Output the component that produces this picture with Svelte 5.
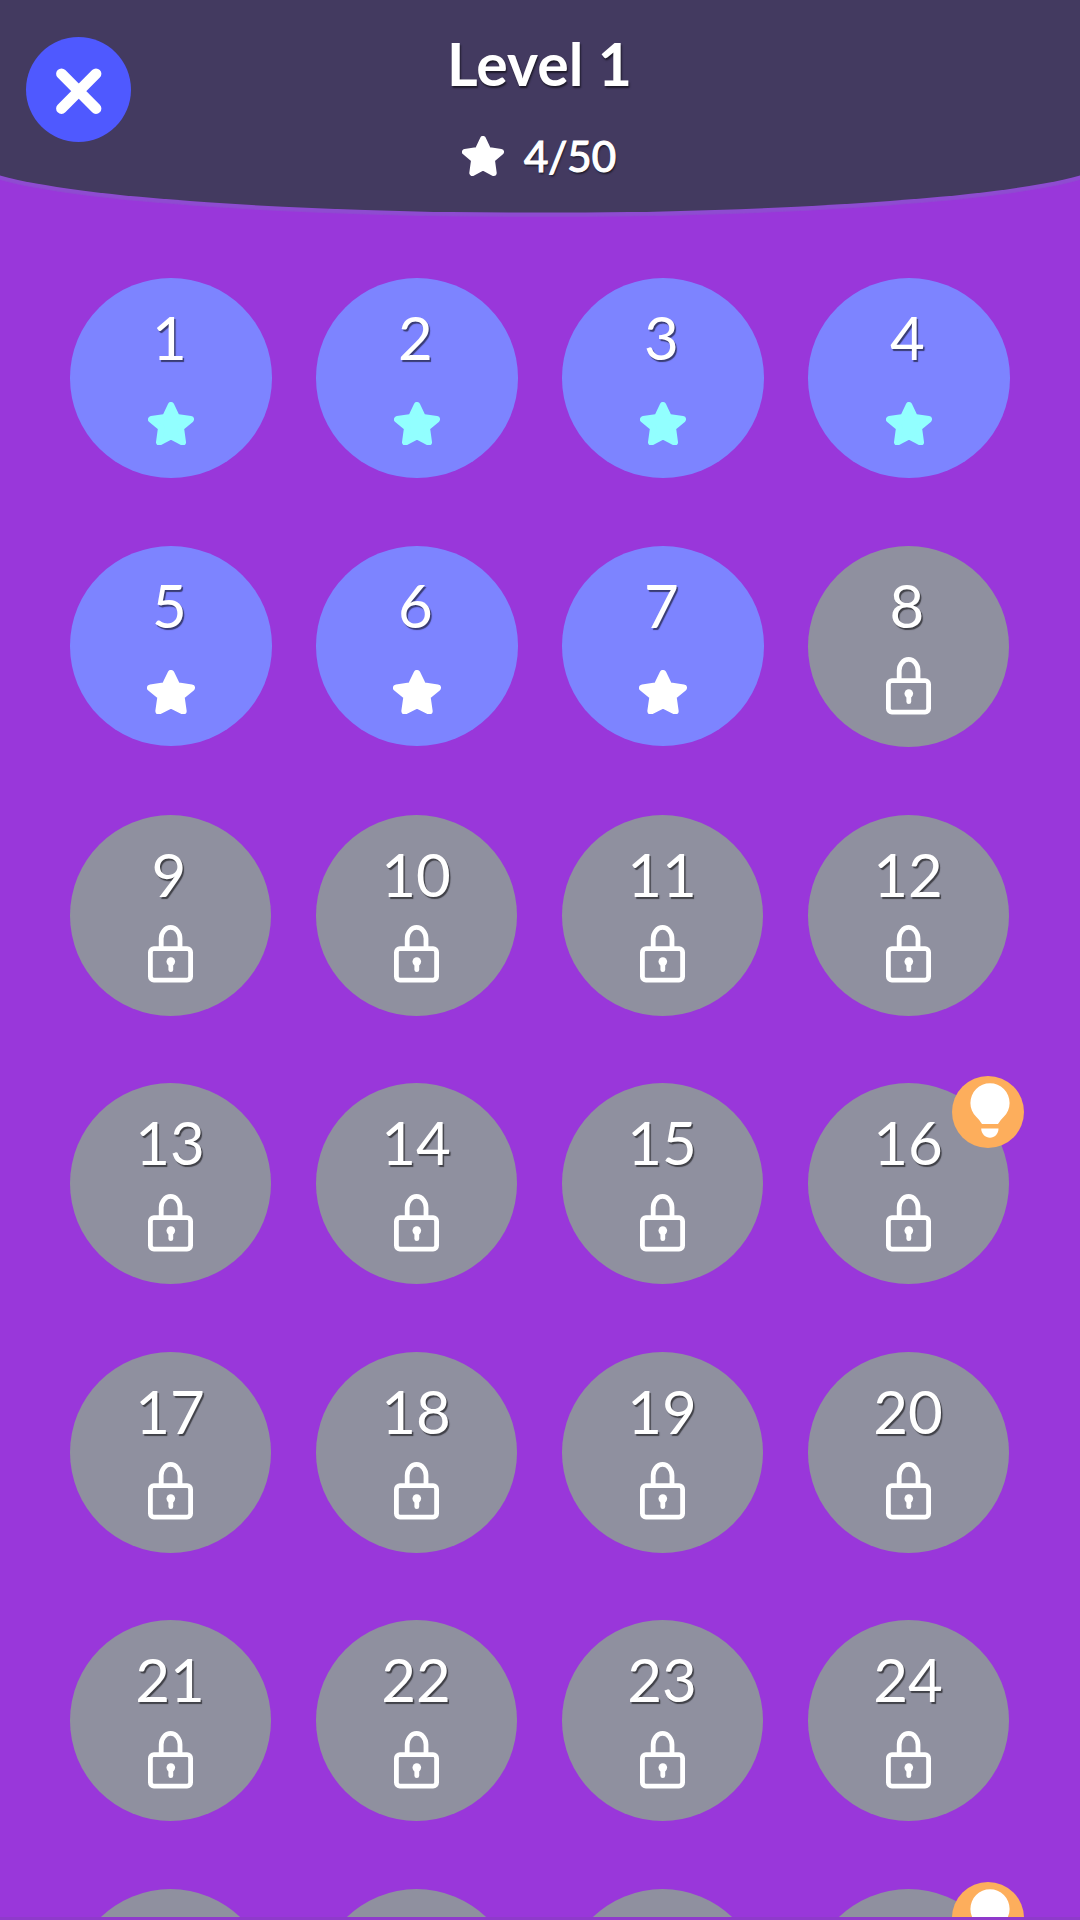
<script lang="ts">
  type Status = "done" | "open" | "locked";
  type Stage = {
    number: number;
    status: Status;
    hint: boolean;
  };

  const title = "Level 1";
  const total = 50;
  const solved = 4;
  const unlocked = 7;
  const visible = 28;
  const hintStages = [16, 28];

  function getStatus(number: number): Status {
    if (number <= solved) return "done";
    if (number <= unlocked) return "open";
    return "locked";
  }

  const stages: Stage[] = Array.from({ length: visible }, (_, index) => {
    const number = index + 1;
    return { number, status: getStatus(number), hint: hintStages.includes(number) };
  });
</script>

{#snippet star()}
  <svg class="star" viewBox="0 0 138 130" preserveAspectRatio="none">
    <path
      d="M69 10 86 46 128 52 98 77 104 120 69 102 34 120 40 77 10 52 52 46Z"
      fill="currentColor"
      stroke="currentColor"
      stroke-width="20"
      stroke-linejoin="round"
    />
  </svg>
{/snippet}

<div class="screen">
  <header>
    <svg class="curve" viewBox="0 0 1080 220">
      <path class="rim" d="M0 0H1080V180A570 54.5 0 0 1 0 180Z" />
      <path class="rim" d="M0 0H1080V179A570 54.5 0 0 1 0 179Z" />
      <path class="fill" d="M0 0H1080V175.500A570 54.5 0 0 1 0 175.500Z" />
    </svg>
    <button class="close" aria-label="Close">
      <svg viewBox="0 0 105 105">
        <path d="M35.5 36.8 70 71.5M70 36.8 35.5 71.5" />
      </svg>
    </button>
    <div class="heading">
      <h1>{title}</h1>
      <div class="score">
        {@render star()}
        <span>{solved}/{total}</span>
      </div>
    </div>
  </header>

  <main>
    {#each stages as { number, status, hint }}
      <div class="cell">
        <button class="stage {status}">
          <span class="number" class:wide={number > 9}>{number}</span>
          {#if status === "locked"}
            <svg class="lock" viewBox="0 0 45 58">
              <path d="M13.2 23V13.6a9.4 11.2 0 0 1 18.8 0V23" />
              <rect x="2.4" y="23.7" width="40.2" height="31.4" rx="3.5" />
              <circle cx="22.8" cy="36.6" r="4.3" />
              <path d="M22.8 37V44.7" />
            </svg>
          {:else}
            {@render star()}
          {/if}
        </button>
        {#if hint}
          <svg class="hint" viewBox="0 0 72 72">
            <circle cx="36" cy="36" r="36" fill="#fdae5c" />
            <path d="M24.2 40.8A19.6 19.6 0 1 1 51.8 40.8Q48 44.500 46 48H30Q28 44.500 24.2 40.8Z" fill="#fff" />
            <path d="M29.2 52.6H46.500C46.500 58 42.500 61.800 38 61.800S29.200 58 29.200 52.600Z" fill="#fff" />
          </svg>
        {/if}
      </div>
    {/each}
  </main>
  <footer></footer>
</div>

<style>
  :global(body) {
    margin: 0;
    background: #9937da;
  }

  .screen {
    display: flex;
    flex-direction: column;
    width: 1080px;
    height: 1920px;
    overflow: hidden;
    background: #9937da;
    color: #fff;
    font-family: Lato, sans-serif;
  }

  button {
    padding: 0;
    border: 0;
    color: inherit;
    font: inherit;
  }

  header {
    position: relative;
    display: grid;
    grid-template-columns: 131px 1fr 131px;
    flex: none;
    height: 268px;
  }

  .curve {
    position: absolute;
    top: 0;
    left: 0;
    width: 1080px;
    height: 220px;
  }
  .curve .fill {
    fill: #433a60;
  }
  .curve .rim {
    fill: #8e50cf;
    fill-opacity: 0.65;
  }

  .close {
    position: relative;
    width: 105px;
    height: 105px;
    margin: 37px 0 0 26px;
    border-radius: 50%;
    background: #4f59ff;
  }
  .close svg {
    display: block;
    fill: none;
    stroke: #fff;
    stroke-width: 10.8;
    stroke-linecap: round;
  }

  .heading {
    position: relative;
    display: flex;
    flex-direction: column;
    align-items: center;
  }

  h1 {
    margin: 28px 1px 0 0;
    font-size: 59px;
    font-weight: 700;
    line-height: 72px;
    text-shadow: 1px 2px 2px rgba(0, 0, 0, 0.6);
  }

  .score {
    display: flex;
    align-items: center;
    gap: 20px;
    margin: 31px 2px 0 0;
    font-size: 42px;
    line-height: 50px;
    text-shadow: 1px 2px 2px rgba(0, 0, 0, 0.6);
    -webkit-text-stroke: 1.2px #fff;
  }
  .score .star {
    width: 42px;
    height: 40px;
  }

  /* top padding keeps room for the badges that stick out of a row */
  main {
    display: grid;
    grid-template-columns: repeat(4, 246px);
    grid-auto-rows: 268.45px;
    height: 1639px;
    padding: 10px 0 0 70px;
    overflow: hidden;
  }

  .cell {
    position: relative;
  }

  .stage {
    display: flex;
    flex-direction: column;
    align-items: center;
    width: 202px;
    height: 199.5px;
    border-radius: 50%;
    background: #7d84ff;
  }
  .stage.locked {
    width: 201px;
    height: 201px;
    background: #8f909f;
  }

  .number {
    margin: 23px 3px 0 0;
    font-size: 60px;
    line-height: 72px;
    text-shadow: 1.5px 1.5px 1px rgba(0, 0, 0, 0.55);
  }
  .number.wide {
    margin-right: 1px;
  }

  .stage .star {
    width: 46px;
    height: 43.5px;
    margin-top: 28.5px;
  }
  .done .star {
    color: #92ffff;
  }
  .stage.open .star {
    width: 48px;
    height: 44.5px;
  }

  .lock {
    width: 45px;
    height: 58px;
    margin-top: 15.5px;
    fill: none;
    stroke: #fff;
    stroke-width: 4.8;
  }
  .lock circle {
    fill: #fff;
    stroke: none;
  }
  .lock path:last-child {
    stroke-linecap: round;
  }

  .hint {
    position: absolute;
    top: -7px;
    left: 144px;
    width: 72px;
    height: 72px;
  }

  footer {
    flex: 1;
    background: #8f3acb;
  }
</style>
